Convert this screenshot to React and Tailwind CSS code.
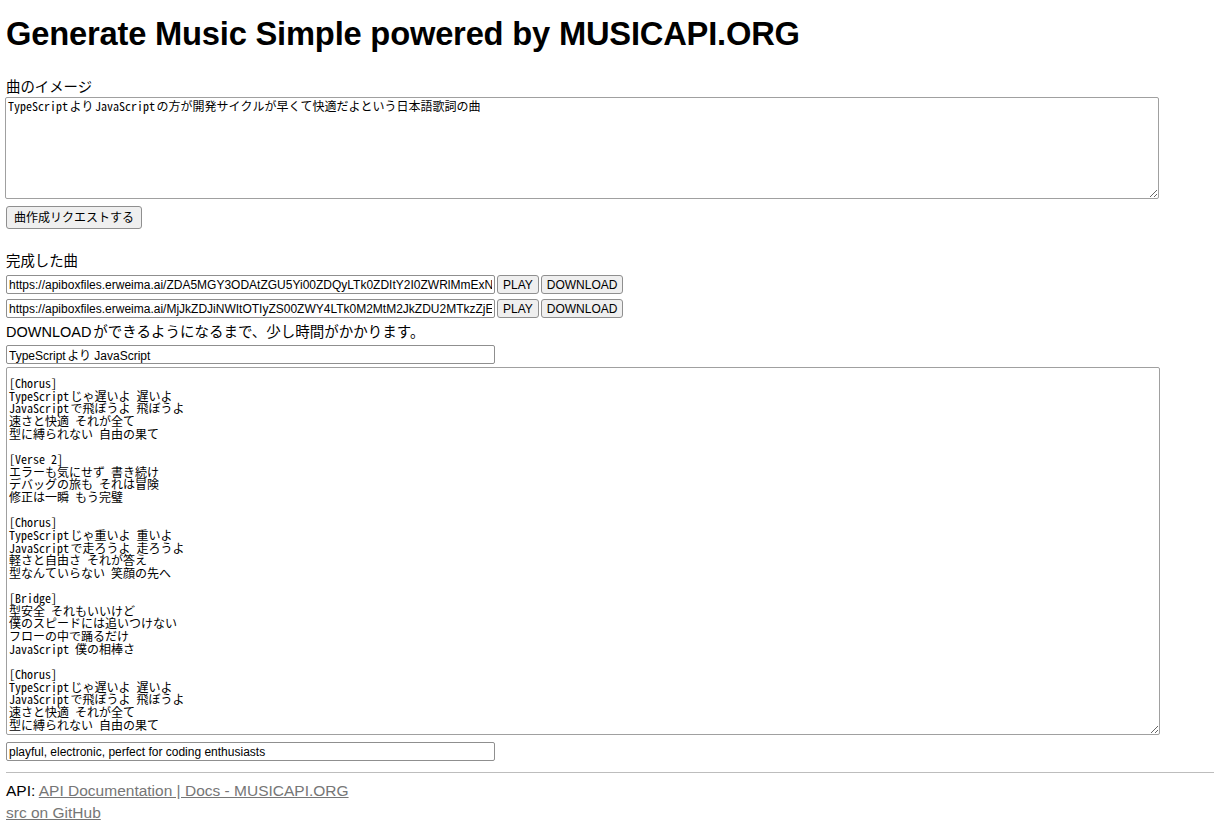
const lyrics = `[Chorus]
TypeScriptじゃ遅いよ 遅いよ
JavaScriptで飛ぼうよ 飛ぼうよ
速さと快適 それが全て
型に縛られない 自由の果て

[Verse 2]
エラーも気にせず 書き続け
デバッグの旅も それは冒険
修正は一瞬 もう完璧

[Chorus]
TypeScriptじゃ重いよ 重いよ
JavaScriptで走ろうよ 走ろうよ
軽さと自由さ それが答え
型なんていらない 笑顔の先へ

[Bridge]
型安全 それもいいけど
僕のスピードには追いつけない
フローの中で踊るだけ
JavaScript 僕の相棒さ

[Chorus]
TypeScriptじゃ遅いよ 遅いよ
JavaScriptで飛ぼうよ 飛ぼうよ
速さと快適 それが全て
型に縛られない 自由の果て`;

const songs = [
  "https://apiboxfiles.erweima.ai/ZDA5MGY3ODAtZGU5Yi00ZDQyLTk0ZDItY2I0ZWRlMmExNjk0.mp3",
  "https://apiboxfiles.erweima.ai/MjJkZDJiNWItOTIyZS00ZWY4LTk0M2MtM2JkZDU2MTkzZjE0.mp3",
];

const mono = "font-['Noto_Sans_Mono_CJK_JP','Liberation_Mono','Noto_Sans_CJK_JP',monospace]";

function Btn({ children }) {
  return (
    <button className="h-[19px] px-[5px] bg-[#efefef] border border-[#8f8f8f] rounded-[3px] text-[12px] leading-none text-black">
      {children}
    </button>
  );
}

export default function App() {
  return (
    <div className="bg-white min-h-[837px] px-[6px] pt-[14px] text-[14.4px] text-black [text-autospace:normal] font-['Liberation_Sans','Noto_Sans_CJK_JP',sans-serif]">
      <h1 className="text-[32.7px] font-bold leading-[40px] tracking-[-0.2px]">
        Generate Music Simple powered by MUSICAPI.ORG
      </h1>

      <div className="mt-[24px] leading-[18px]">曲のイメージ</div>
      <textarea
        readOnly
        defaultValue="TypeScriptよりJavaScriptの方が開発サイクルが早くて快適だよという日本語歌詞の曲"
        className={`block w-[1154px] h-[102px] mt-[1px] -ml-[1px] px-[2px] py-[1px] border border-[#a0a0a0] rounded-[2px] text-[12px] leading-[13px] ${mono} outline-none`}
      />
      <button className="mt-[7px] h-[23px] px-[7px] bg-[#efefef] border border-[#8f8f8f] rounded-[3px] text-[12px] leading-none">
        曲作成リクエストする
      </button>

      <div className="mt-[23px] leading-[18px]">完成した曲</div>
      <div className="mt-[5px] flex flex-col gap-[5px]">
        {songs.map((url) => (
          <div key={url} className="flex items-center gap-[2px] h-[19px]">
            <input
              readOnly
              defaultValue={url}
              className="w-[489px] h-[19px] px-[2px] border border-[#8f8f8f] rounded-[2px] text-[12px] outline-none"
            />
            <Btn>PLAY</Btn>
            <Btn>DOWNLOAD</Btn>
          </div>
        ))}
      </div>
      <div className="mt-[4px] text-[14.5px] leading-[20px]">
        DOWNLOADができるようになるまで、少し時間がかかります。
      </div>
      <input
        readOnly
        defaultValue="TypeScriptより JavaScript"
        className="block mt-[3px] w-[489px] h-[19px] px-[2px] border border-[#8f8f8f] rounded-[2px] text-[12px] outline-none"
      />
      <textarea
        readOnly
        defaultValue={lyrics}
        className={`block w-[1154px] h-[368px] mt-[3px] px-[2px] pt-[9px] pb-[1px] border border-[#a0a0a0] rounded-[2px] text-[12px] leading-[12.65px] ${mono} outline-none`}
      />
      <input
        readOnly
        defaultValue="playful, electronic, perfect for coding enthusiasts"
        className="block mt-[7px] w-[489px] h-[19px] px-[2px] border border-[#8f8f8f] rounded-[2px] text-[12px] outline-none"
      />

      <hr className="mt-[11px] border-t border-[#bdbdbd]" />

      <div className="mt-[7px] leading-[22px] text-[15.5px]">
        API:{" "}
        <a href="#" className="text-[#767676] underline">
          API Documentation | Docs - MUSICAPI.ORG
        </a>
      </div>
      <div className="leading-[22px] text-[15.5px]">
        <a href="#" className="text-[#767676] underline">
          src on GitHub
        </a>
      </div>
    </div>
  );
}
